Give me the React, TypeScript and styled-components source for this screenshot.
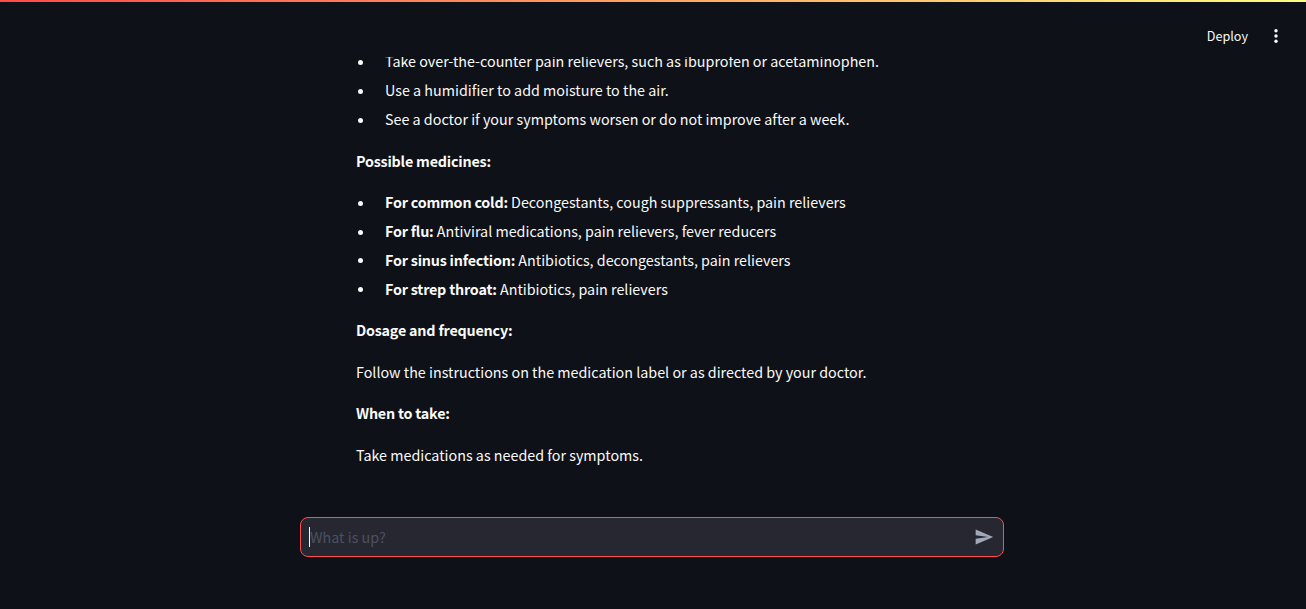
import React from "react";
import styled, { createGlobalStyle } from "styled-components";

const GlobalStyle = createGlobalStyle`
  html, body {
    margin: 0;
    padding: 0;
    background: #0e1117;
  }
`;

const Page = styled.div`
  display: flex;
  flex-direction: column;
  height: 609px;
  overflow: hidden;
  background: #0e1117;
  color: #fafafa;
  font-family: "Noto Sans CJK SC", "Noto Sans", sans-serif;
  font-size: 14.32px;
  line-height: 25.6px;
`;

const Decoration = styled.div`
  height: 2px;
  flex: none;
  background: linear-gradient(90deg, #ff4b4b, #fffd80);
`;

const Header = styled.header`
  flex: none;
  height: 55px;
  display: flex;
  align-items: flex-start;
  justify-content: flex-end;
  gap: 20px;
  padding: 22px 22px 0 0;
  box-sizing: border-box;
`;

const DeployButton = styled.button`
  border: 0;
  padding: 0;
  background: none;
  color: #fafafa;
  font: inherit;
  font-size: 12.6px;
  line-height: 24px;
`;

const MenuButton = styled.button`
  display: flex;
  align-items: center;
  border: 0;
  padding: 0;
  height: 24px;
  background: none;
  color: #fafafa;
`;

const Messages = styled.main`
  flex: 1;
  min-height: 0;
  overflow: hidden;
  display: flex;
  flex-direction: column;
  justify-content: flex-end;
  padding: 0 356px 49.4px;
`;

const Paragraph = styled.p`
  flex: none;
  margin: 0 0 16px;
  &:last-child {
    margin-bottom: 0;
  }
`;

const Strong = styled.strong`
  letter-spacing: -0.2px;
`;

const BulletList = styled.ul`
  flex: none;
  margin: 0 0 16px;
  padding: 0 0 0 29px;
  list-style: none;
`;

const Bullet = styled.li<{ $gap?: number }>`
  margin: 0 0 ${(props) => props.$gap ?? 3.2}px;
  padding: 0;
  &:last-child {
    margin-bottom: 0;
  }
  &::before {
    content: "";
    display: inline-block;
    width: 5px;
    height: 5px;
    margin: 0 22px 2px -27px;
    border-radius: 50%;
    background: #fafafa;
    vertical-align: middle;
  }
`;

const Footer = styled.footer`
  flex: none;
  height: 92px;
  padding: 0 302px 0 300px;
  box-sizing: border-box;
`;

const ChatBox = styled.div`
  height: 40px;
  box-sizing: border-box;
  display: flex;
  align-items: center;
  padding: 0 9px 0 8px;
  background: #262730;
  border: 1px solid #ff4b4b;
  border-radius: 8px;
`;

const Caret = styled.span`
  flex: none;
  width: 1px;
  height: 20px;
  background: #fafafa;
`;

const Placeholder = styled.span`
  flex: 1;
  color: #4d5162;
  line-height: 25.6px;
`;

const SendIcon = styled.svg`
  flex: none;
  width: 20px;
  height: 20px;
  fill: #a3a8b8;
`;

const items = [
  "Take over-the-counter pain relievers, such as ibuprofen or acetaminophen.",
  "Use a humidifier to add moisture to the air.",
  "See a doctor if your symptoms worsen or do not improve after a week.",
];

const medicines = [
  ["For common cold:", " Decongestants, cough suppressants, pain relievers"],
  ["For flu:", " Antiviral medications, pain relievers, fever reducers"],
  ["For sinus infection:", " Antibiotics, decongestants, pain relievers"],
  ["For strep throat:", " Antibiotics, pain relievers"],
];

const App = () => {
  return (
    <Page>
      <GlobalStyle />
      <Decoration />
      <Header>
        <DeployButton>Deploy</DeployButton>
        <MenuButton aria-label="Menu">
          <svg width="16" height="16" viewBox="0 0 16 16" fill="currentColor">
            <circle cx="8" cy="2.8" r="1.7" />
            <circle cx="8" cy="8" r="1.7" />
            <circle cx="8" cy="13.2" r="1.7" />
          </svg>
        </MenuButton>
      </Header>
      <Messages>
        <BulletList>
          {items.map((text) => (
            <Bullet key={text} $gap={3.5}>{text}</Bullet>
          ))}
        </BulletList>
        <Paragraph><Strong>Possible medicines:</Strong></Paragraph>
        <BulletList>
          {medicines.map(([label, text]) => (
            <Bullet key={label}>
              <Strong>{label}</Strong>
              {text}
            </Bullet>
          ))}
        </BulletList>
        <Paragraph><Strong>Dosage and frequency:</Strong></Paragraph>
        <Paragraph>Follow the instructions on the medication label or as directed by your doctor.</Paragraph>
        <Paragraph><Strong>When to take:</Strong></Paragraph>
        <Paragraph>Take medications as needed for symptoms.</Paragraph>
      </Messages>
      <Footer>
        <ChatBox>
          <Caret />
          <Placeholder>What is up?</Placeholder>
          <SendIcon viewBox="0 0 24 24">
            <path d="M2.01 21L23 12 2.01 3 2 10l15 2-15 2z" />
          </SendIcon>
        </ChatBox>
      </Footer>
    </Page>
  );
};

export default App;
